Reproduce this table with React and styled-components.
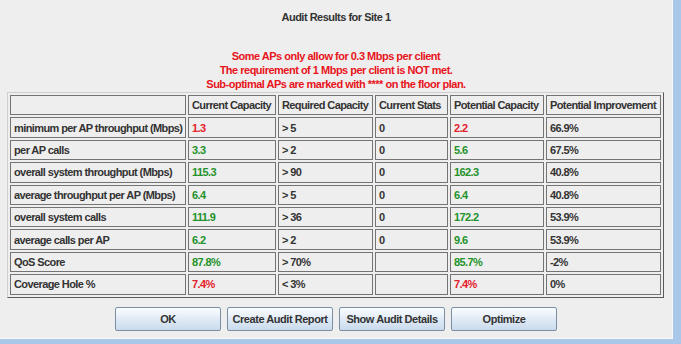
import styled, { createGlobalStyle } from "styled-components";

const GlobalStyle = createGlobalStyle`
  body {
    margin: 0;
    background: #eeeeee;
    font-family: "Liberation Sans", Arial, sans-serif;
  }
`;

const columns = [
  { title: "", width: 176 },
  { title: "Current Capacity", width: 88 },
  { title: "Required Capacity", width: 95 },
  { title: "Current Stats", width: 73 },
  { title: "Potential Capacity", width: 94 },
  { title: "Potential Improvement", width: 115 },
];

// each value: [text, tone]
const rows = [
  ["minimum per AP throughput (Mbps)", ["1.3", "bad"], "> 5", "0", ["2.2", "bad"], "66.9%"],
  ["per AP calls", ["3.3", "good"], "> 2", "0", ["5.6", "good"], "67.5%"],
  ["overall system throughput (Mbps)", ["115.3", "good"], "> 90", "0", ["162.3", "good"], "40.8%"],
  ["average throughput per AP (Mbps)", ["6.4", "good"], "> 5", "0", ["6.4", "good"], "40.8%"],
  ["overall system calls", ["111.9", "good"], "> 36", "0", ["172.2", "good"], "53.9%"],
  ["average calls per AP", ["6.2", "good"], "> 2", "0", ["9.6", "good"], "53.9%"],
  ["QoS Score", ["87.8%", "good"], "> 70%", "", ["85.7%", "good"], "-2%"],
  ["Coverage Hole %", ["7.4%", "bad"], "< 3%", "", ["7.4%", "bad"], "0%"],
];

const tones = {
  good: "#23922a",
  bad: "#e5202a",
};

const buttons = ["OK", "Create Audit Report", "Show Audit Details", "Optimize"];

const AuditDialog = () => {
  return (
    <Frame>
      <GlobalStyle />
      <Panel>
        <Title>Audit Results for Site 1</Title>
        <Warning>
          <div>Some APs only allow for 0.3 Mbps per client</div>
          <div>The requirement of 1 Mbps per client is NOT met.</div>
          <div>Sub-optimal APs are marked with **** on the floor plan.</div>
        </Warning>
        <Table>
          <colgroup>
            {columns.map((c, i) => (
              <col key={i} style={{ width: c.width }} />
            ))}
          </colgroup>
          <thead>
            <tr>
              {columns.map((c, i) => (
                <Cell as="th" key={i}>{c.title}</Cell>
              ))}
            </tr>
          </thead>
          <tbody>
            {rows.map((row, r) => (
              <tr key={r}>
                {row.map((v, i) =>
                  Array.isArray(v) ? (
                    <Cell key={i} $tone={v[1]}>{v[0]}</Cell>
                  ) : (
                    <Cell key={i}>{v}</Cell>
                  )
                )}
              </tr>
            ))}
          </tbody>
        </Table>
        <ButtonRow>
          {buttons.map((b) => (
            <Button key={b}>{b}</Button>
          ))}
        </ButtonRow>
      </Panel>
    </Frame>
  );
};

const Frame = styled.div`
  width: 681px;
  height: 344px;
  box-sizing: border-box;
  border-right: 8px solid #a9c7e8;
  border-bottom: 5px solid #a9c7e8;
  background: #eeeeee;
`;

const Panel = styled.div`
  height: 100%;
  box-sizing: border-box;
  border-right: 1px solid #f8f8f8;
  border-bottom: 1px solid #f8f8f8;
  padding-top: 10px;
  display: flex;
  flex-direction: column;
  font-weight: bold;
  font-size: 11px;
  letter-spacing: -0.5px;
  color: #333333;
`;

const Title = styled.div`
  text-align: center;
  line-height: 14px;
  color: #333333;
`;

const Warning = styled.div`
  margin-top: 25px;
  text-align: center;
  line-height: 14px;
  color: #e8141c;
`;

const Table = styled.table`
  margin: 1px 0 0 7px;
  width: 657px;
  table-layout: fixed;
  border-collapse: separate;
  border-spacing: 2px;
  border: 1px solid;
  border-color: #cfcfcf #5a5a5a #5a5a5a #cfcfcf;
  font-size: 11px;
  letter-spacing: -0.6px;
`;

const Cell = styled.td`
  height: 20.4px;
  box-sizing: border-box;
  padding: 0 2px 0 3px;
  border: 1px solid #747474;
  text-align: left;
  font-weight: bold;
  white-space: nowrap;
  overflow: hidden;
  color: ${(p) => tones[p.$tone] || "#333333"};
`;

const ButtonRow = styled.div`
  margin-top: 9px;
  display: flex;
  justify-content: center;
  gap: 6px;
`;

const Button = styled.button`
  width: 106px;
  height: 24px;
  padding: 0;
  border: 1px solid #7d8ea3;
  border-radius: 2px;
  background: linear-gradient(#fbfdff, #e3ecf6 45%, #c9daec);
  font-family: "Liberation Sans", Arial, sans-serif;
  font-weight: bold;
  font-size: 11px;
  letter-spacing: -0.45px;
  color: #333333;
`;

export default AuditDialog;
